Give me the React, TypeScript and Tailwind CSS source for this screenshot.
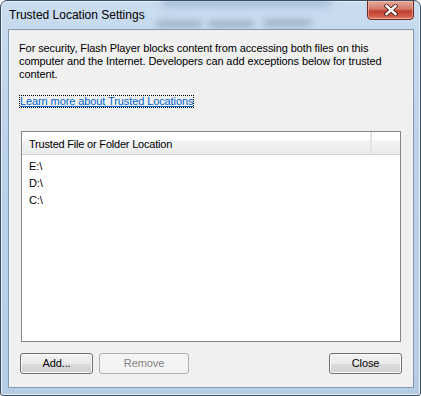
import React from "react";

const font = { fontFamily: '"Liberation Sans", Arial, sans-serif' };

function Btn({ label, w, disabled }: { label: string; w: string; disabled?: boolean }) {
  return disabled ? (
    <div
      className={`${w} h-[21px] flex items-center justify-center rounded-[3px] border border-[#adb2b5] bg-[#f4f4f4] text-[#838383] text-[11px] tracking-[-0.1px]`}
    >
      {label}
    </div>
  ) : (
    <div
      className={`${w} h-[21px] flex items-center justify-center rounded-[3px] border border-[#707070] bg-[linear-gradient(to_bottom,#f2f2f2_0%,#ebebeb_50%,#dddddd_51%,#cfcfcf_100%)] text-black text-[11px] tracking-[-0.1px] shadow-[inset_0_0_0_1px_#fbfbfb]`}
    >
      {label}
    </div>
  );
}

export default function App() {
  return (
    <div style={font} className="w-[421px] h-[396px] bg-white">
      <div className="relative overflow-hidden w-[421px] h-[396px] flex flex-col rounded-t-[7px] rounded-b-[3px] border border-[#3c4e63] bg-[linear-gradient(to_bottom,#c9dcf0_0%,#bcd2ea_40%,#b6cde6_100%)] pl-[7px] pr-[6px] pb-[7px] shadow-[inset_0_0_0_1px_#e6eef8]">
        {/* blurred background seen through glass */}
        <div className="absolute left-[160px] top-[-4px] w-[170px] h-[9px] rounded-full bg-[#8ea8c6] blur-[4px] opacity-70" />
        <div className="absolute left-[155px] top-[19px] w-[46px] h-[8px] rounded-full bg-[#8d9db0] blur-[3px] opacity-60" />
        <div className="absolute left-[207px] top-[19px] w-[46px] h-[8px] rounded-full bg-[#8d9db0] blur-[3px] opacity-60" />
        <div className="absolute left-[262px] top-[18px] w-[49px] h-[8px] rounded-full bg-[#8d9db0] blur-[3px] opacity-60" />
        {/* Title bar */}
        <div className="relative h-[28px] flex items-start shrink-0">
          <div className="pl-[1px] pt-[7px] text-[12px] leading-[15px] text-black">Trusted Location Settings</div>
          <div className="ml-auto -mt-px w-[47px] h-[20px] rounded-b-[4px] border border-[#6b2a22] bg-[linear-gradient(to_bottom,#e3a99b_0%,#d47a68_45%,#c0402f_55%,#cf5c48_85%,#e08b72_100%)] flex items-center justify-center shadow-[inset_0_0_0_1px_rgba(255,200,190,0.5)]">
            <svg width="14" height="12" viewBox="0 0 14 12">
              <path d="M2.5 2 L11.5 10 M11.5 2 L2.5 10" stroke="#4a1b15" strokeWidth="4.2" strokeLinecap="square" />
              <path d="M2.5 2 L11.5 10 M11.5 2 L2.5 10" stroke="#ffffff" strokeWidth="2.4" strokeLinecap="square" />
            </svg>
          </div>
        </div>
        {/* Client area */}
        <div className="relative flex-1 flex flex-col border border-[#8598ad] bg-[#f0f0f0] pl-[10px] pr-[11px] pt-[12px] pb-[13px] text-[11px] tracking-[-0.1px] leading-[13px] text-black">
          <p>
            For security, Flash Player blocks content from accessing both files on this computer and the Internet. Developers can add exceptions below for trusted content.
          </p>
          <div className="mt-[14px] flex">
            <span className="border border-dotted border-black text-[#0066cc] underline leading-[11px] h-[13px]">
              Learn more about Trusted Locations
            </span>
          </div>
          <div className="mt-[23px] ml-[2px] mr-[1px] h-[211px] border border-[#828790] bg-white flex flex-col">
            <div className="h-[23px] flex border-b border-[#d5d5d5] bg-[linear-gradient(to_bottom,#ffffff_0%,#ffffff_35%,#f3f4f6_40%,#e9eaec_100%)]">
              <div className="w-[350px] pl-[7px] pt-[6px] leading-[13px] tracking-[-0.2px] border-r-2 border-[#e3e3e3]">
                Trusted File or Folder Location
              </div>
              <div className="flex-1" />
            </div>
            <div className="pt-[3px] pl-[7px] flex flex-col">
              <div className="h-[17px] leading-[17px]">E:\</div>
              <div className="h-[17px] leading-[17px]">D:\</div>
              <div className="h-[17px] leading-[17px]">C:\</div>
            </div>
          </div>
          <div className="mt-auto flex items-center pl-[1px]">
            <Btn label="Add..." w="w-[73px]" />
            <div className="w-[6px]" />
            <Btn label="Remove" w="w-[90px]" disabled />
            <div className="ml-auto" />
            <Btn label="Close" w="w-[73px]" />
          </div>
        </div>
      </div>
    </div>
  );
}
